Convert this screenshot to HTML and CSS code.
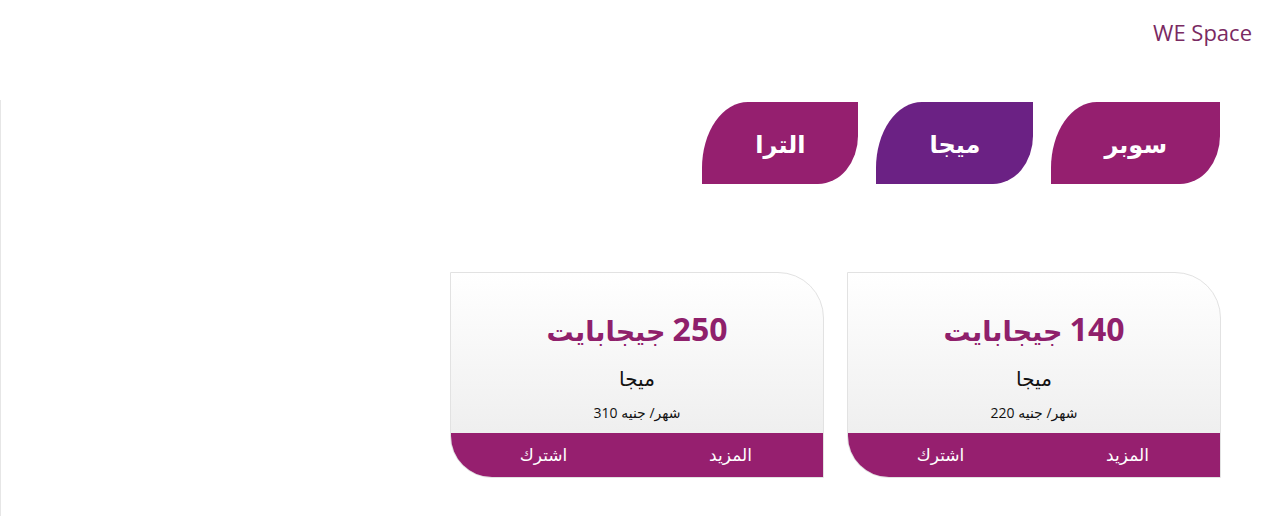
FILE: index.html
```html
<!DOCTYPE html>
<html lang="ar" dir="rtl">
<head>
<meta charset="utf-8">
<title>WE Space</title>
<link rel="stylesheet" href="styles.css">
</head>
<body>
<header class="topbar">
  <span class="brand" dir="ltr">WE Space</span>
</header>
<main class="content">
  <nav class="tabs">
    <a class="tab tab-magenta" href="#">سوبر</a>
    <a class="tab tab-active" href="#">ميجا</a>
    <a class="tab tab-magenta" href="#">الترا</a>
  </nav>
  <section class="cards">
    <article class="card">
      <div class="card-body">
        <h2 class="card-title"><span class="num">140</span> جيجابايت</h2>
        <p class="card-name">ميجا</p>
        <p class="card-price">شهر/ جنيه 220</p>
      </div>
      <div class="card-footer">
        <a class="card-link" href="#">المزيد</a>
        <a class="card-link" href="#">اشترك</a>
      </div>
    </article>
    <article class="card">
      <div class="card-body">
        <h2 class="card-title"><span class="num">250</span> جيجابايت</h2>
        <p class="card-name">ميجا</p>
        <p class="card-price">شهر/ جنيه 310</p>
      </div>
      <div class="card-footer">
        <a class="card-link" href="#">المزيد</a>
        <a class="card-link" href="#">اشترك</a>
      </div>
    </article>
  </section>
</main>
</body>
</html>
```
FILE: styles.css
```css
* { box-sizing: border-box; }
html, body { margin: 0; padding: 0; background: #ffffff; }
body {
  font-family: "Open Sans", "Noto Sans", "DejaVu Sans", sans-serif;
  color: #111;
  width: 1268px;
  height: 516px;
  overflow: hidden;
}
.topbar {
  height: 100px;
  padding: 18px 16px 0 0;
}
.brand {
  display: inline-block;
  font-size: 22px;
  line-height: 28px;
  color: #7a2a62;
}
.content {
  height: 416px;
  border-left: 1px solid #e6e6e6;
  padding: 2px 47px 0 0;
}
.tabs {
  display: flex;
  gap: 18px;
  margin-right: 1px;
}
.tab {
  display: flex;
  align-items: center;
  justify-content: center;
  height: 82px;
  padding: 0 53px;
  color: #fff;
  font-weight: bold;
  font-size: 24px;
  text-decoration: none;
  border-top-left-radius: 46px 66px;
  border-bottom-right-radius: 40px 48px;
}
.tab-magenta { background: #951f6f; }
.tab-active { background: #6b2184; }
.cards {
  display: flex;
  gap: 23px;
  margin-top: 88px;
}
.card {
  width: 374px;
  height: 206px;
  border: 1px solid #e2e2e2;
  border-top-right-radius: 46px;
  border-bottom-left-radius: 42px;
  background: linear-gradient(#ffffff, #efefef 78%);
  overflow: hidden;
  display: flex;
  flex-direction: column;
}
.card-body {
  height: 160px;
  padding-top: 37px;
  text-align: center;
}
.card-title {
  margin: 0;
  font-size: 27px;
  line-height: 38px;
  font-weight: bold;
  color: #8f206b;
}
.num {
  font-size: 32px;
}
.card-name {
  margin: 15px 0 0;
  font-size: 20px;
  line-height: 28px;
  color: #111;
}
.card-price {
  margin: 10px 0 0;
  font-size: 14px;
  line-height: 20px;
  color: #111;
}
.card-footer {
  flex: 1;
  display: flex;
  background: #961f6f;
  margin: 0 -1px -1px;
}
.card-link {
  flex: 1;
  text-align: center;
  color: #fff;
  text-decoration: none;
  font-size: 17px;
  line-height: 44px;
}
```
